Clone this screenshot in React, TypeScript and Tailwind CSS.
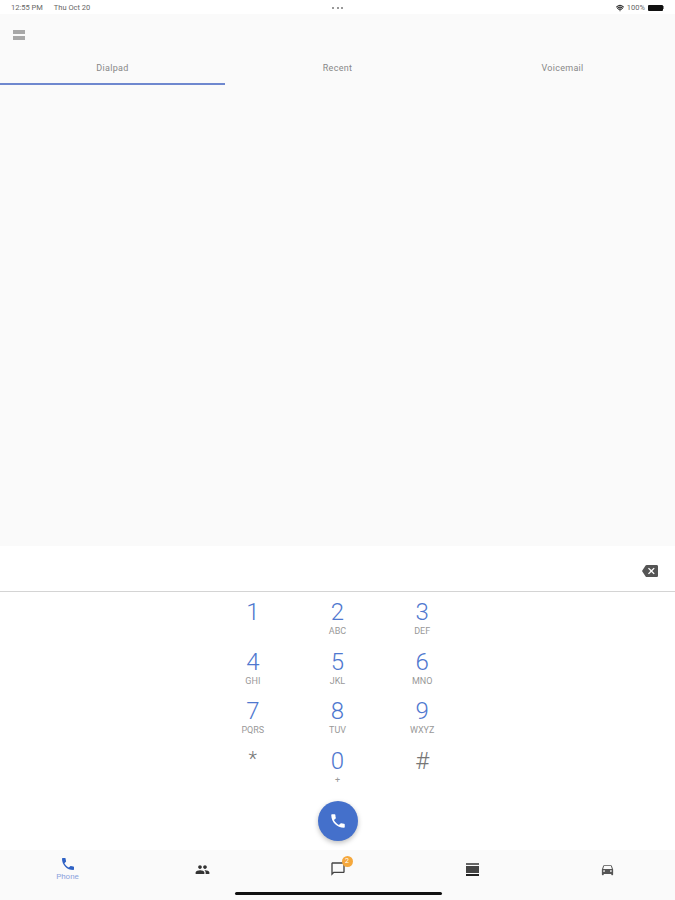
import { Phone, Wifi } from "lucide-react";

const keys = [
    { digit: "1", sub: "" },
    { digit: "2", sub: "ABC" },
    { digit: "3", sub: "DEF" },
    { digit: "4", sub: "GHI" },
    { digit: "5", sub: "JKL" },
    { digit: "6", sub: "MNO" },
    { digit: "7", sub: "PQRS" },
    { digit: "8", sub: "TUV" },
    { digit: "9", sub: "WXYZ" },
    { digit: "*", sub: "" },
    { digit: "0", sub: "+" },
    { digit: "#", sub: "" },
];

const PhoneGlyph = ({ className }: { className: string }) => (
    <svg viewBox="0 0 24 24" className={className} fill="currentColor">
        <path d="M6.6 10.8c1.4 2.8 3.8 5.1 6.6 6.6l2.2-2.2c.3-.3.7-.4 1-.2 1.1.4 2.3.6 3.6.6.6 0 1 .4 1 1V20c0 .6-.4 1-1 1C10.6 21 3 13.4 3 4c0-.6.4-1 1-1h3.500c.6 0 1 .4 1 1 0 1.300.2 2.500.6 3.600.1.300 0 .700-.2 1l-2.300 2.200z" />
    </svg>
);

const App = () => {
    return (
        <div className="relative flex h-[900px] w-[675px] flex-col overflow-hidden bg-white font-['Roboto',sans-serif]">
            {/* status bar */}
            <div className="flex h-[14px] items-center bg-white pl-[11px] pr-[11px] pt-[1px] text-[7.5px] text-[#666]">
                <div className="flex flex-1 gap-[11px]">
                    <span>12:55 PM</span>
                    <span>Thu Oct 20</span>
                </div>
                <div className="flex gap-[2.500px]">
                    <span className="h-[2px] w-[2px] rounded-full bg-[#777]" />
                    <span className="h-[2px] w-[2px] rounded-full bg-[#777]" />
                    <span className="h-[2px] w-[2px] rounded-full bg-[#777]" />
                </div>
                <div className="flex flex-1 items-center justify-end gap-[3px]">
                    <Wifi className="h-[8px] w-[8px] text-[#333]" strokeWidth={3.5} />
                    <span>100%</span>
                    <div className="flex items-center">
                        <span className="h-[6px] w-[15px] rounded-[1px] bg-[#111]" />
                        <span className="h-[3px] w-[1px] bg-[#888]" />
                    </div>
                </div>
            </div>

            {/* top area */}
            <div className="flex h-[532px] flex-col bg-[#fafafa]">
                <div className="flex h-[40px] items-center pl-[13px] pt-[1px]">
                    <div className="flex w-[12px] flex-col gap-[2px]">
                        <span className="h-[4px] bg-[#a8a8a8]" />
                        <span className="h-[4px] bg-[#a8a8a8]" />
                    </div>
                </div>
                <div className="grid h-[31px] grid-cols-3 text-center text-[9px] tracking-[0.3px] text-[#888]">
                    <div className="flex items-center justify-center border-b-2 border-[#6f88cf]">
                        Dialpad
                    </div>
                    <div className="flex items-center justify-center pb-[2px]">Recent</div>
                    <div className="flex items-center justify-center pb-[2px]">Voicemail</div>
                </div>
            </div>

            {/* number field */}
            <div className="flex h-[46px] items-center justify-end border-b border-[#d4d4d4] bg-white pr-[17px] pt-[5px]">
                <svg viewBox="0 0 24 24" className="h-[16px] w-[16px] text-[#555]" fill="currentColor">
                    <path d="M22 3H7c-.7 0-1.200.3-1.600.9L0 12l5.400 8.100c.4.600.9.900 1.600.9h15c1.100 0 2-.9 2-2V5c0-1.100-.9-2-2-2zm-3 12.600L17.600 17 14 13.400 10.400 17 9 15.600 12.600 12 9 8.400 10.400 7 14 10.600 17.600 7 19 8.400 15.400 12l3.600 3.600z" />
                </svg>
            </div>

            {/* keypad */}
            <div className="flex flex-1 flex-col items-center bg-white">
                <div className="mt-[6px] grid w-[254px] grid-cols-3 auto-rows-[49.500px]">
                    {keys.map((key) => (
                        <div key={key.digit} className="flex flex-col items-center">
                            {key.digit === "*" ? (
                                <span className="h-[28px] text-[20px] leading-[24px] font-light text-[#777]">
                                    {key.digit}
                                </span>
                            ) : key.digit === "#" ? (
                                <span className="h-[28px] text-[24px] leading-[28px] font-light text-[#777]">
                                    {key.digit}
                                </span>
                            ) : (
                                <span className="h-[28px] text-[24px] leading-[28px] font-light text-[#4f78cf]">
                                    {key.digit}
                                </span>
                            )}
                            <span className="text-[9px] leading-[11px] text-[#999]">{key.sub}</span>
                        </div>
                    ))}
                </div>
                <button className="mt-[5px] flex h-[40px] w-[40px] items-center justify-center rounded-full bg-[#4470cb] shadow-[0_2px_5px_rgba(0,0,0,0.25)]">
                    <PhoneGlyph className="h-[18px] w-[18px] text-white" />
                </button>
            </div>

            {/* bottom nav */}
            <div className="grid h-[50px] grid-cols-5 bg-[#fafafa]">
                <div className="flex flex-col items-center pt-[6px]">
                    <PhoneGlyph className="h-[16px] w-[16px] text-[#2f62c4]" />
                    <span className="text-[8px] leading-[9px] text-[#8ca3dd]">Phone</span>
                </div>
                <div className="flex items-center justify-center pb-[12px]">
                    <svg viewBox="0 0 24 24" className="h-[15px] w-[15px] text-[#333]" fill="currentColor">
                        <path d="M16 11c1.660 0 2.990-1.340 2.990-3S17.660 5 16 5s-3 1.340-3 3 1.340 3 3 3zm-8 0c1.660 0 2.990-1.340 2.990-3S9.660 5 8 5 5 6.340 5 8s1.340 3 3 3zm0 2c-2.330 0-7 1.170-7 3.500V19h14v-2.500C15 14.170 10.330 13 8 13zm8 0c-.290 0-.620.020-.970.050 1.160.840 1.970 1.970 1.970 3.450V19h6v-2.500c0-2.330-4.670-3.500-7-3.500z" />
                    </svg>
                </div>
                <div className="flex items-center justify-center pb-[12px]">
                    <div className="relative">
                        <svg viewBox="0 0 24 24" className="h-[16px] w-[16px] text-[#444]" fill="currentColor">
                            <path d="M20 2H4c-1.100 0-2 .9-2 2v18l4-4h14c1.100 0 2-.9 2-2V4c0-1.100-.9-2-2-2zm0 14H5.200L4 17.200V4h16v12z" />
                        </svg>
                        <span className="absolute right-[-7px] top-[-5px] flex h-[11px] w-[11px] items-center justify-center rounded-full bg-[#f5a83c] text-[7px] text-white">
                            2
                        </span>
                    </div>
                </div>
                <div className="flex items-center justify-center pb-[12px]">
                    <div className="flex w-[13px] flex-col gap-[1px]">
                        <span className="h-[2px] bg-[#666]" />
                        <span className="h-[7px] bg-[#444]" />
                        <span className="h-[2px] bg-[#222]" />
                    </div>
                </div>
                <div className="flex items-center justify-center pb-[12px]">
                    <svg viewBox="0 0 24 24" className="h-[15px] w-[15px] text-[#555]" fill="currentColor">
                        <path d="M18.900 6c-.2-.6-.8-1-1.400-1h-11c-.7 0-1.200.4-1.400 1L3 12v8c0 .6.400 1 1 1h1c.6 0 1-.4 1-1v-1h12v1c0 .6.400 1 1 1h1c.6 0 1-.4 1-1v-8l-2.100-6zM6.500 16c-.8 0-1.500-.7-1.500-1.500S5.700 13 6.500 13s1.500.7 1.500 1.500S7.300 16 6.500 16zm11 0c-.8 0-1.500-.7-1.500-1.500s.7-1.500 1.500-1.500 1.500.7 1.500 1.500-.7 1.500-1.500 1.500zM5 11l1.500-4.500h11L19 11H5z" />
                    </svg>
                </div>
            </div>

            {/* home indicator */}
            <div className="absolute bottom-[5px] left-[235px] h-[3px] w-[207px] rounded-full bg-[#111]" />
        </div>
    );
};

export default App;
